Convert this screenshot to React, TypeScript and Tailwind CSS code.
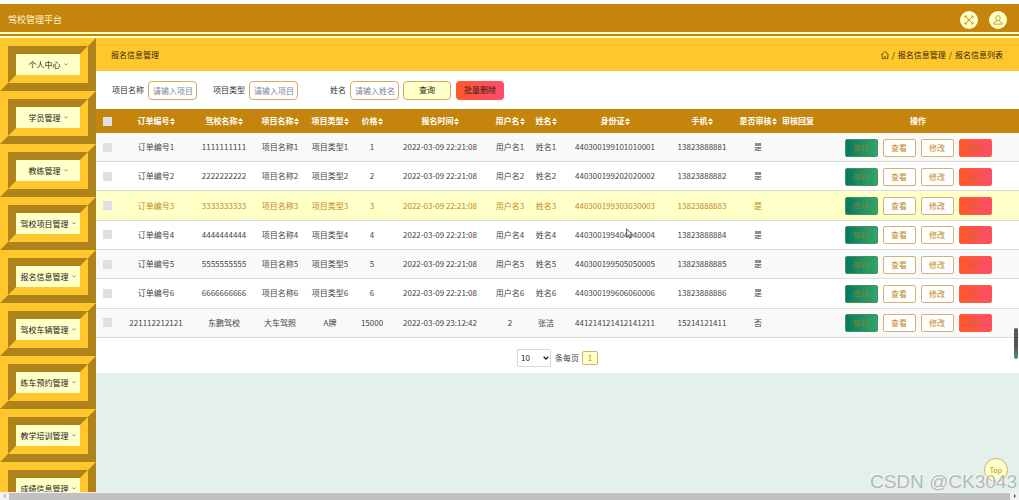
import { useState } from "react";
import clsx from "clsx";

const MENU = [
  "个人中心",
  "学员管理",
  "教练管理",
  "驾校项目管理",
  "报名信息管理",
  "驾校车辆管理",
  "练车预约管理",
  "教学培训管理",
  "成绩信息管理",
];

const COLUMNS: { label: string; width: string; sortable: boolean }[] = [
  { label: "订单编号", width: "w-[74px]", sortable: true },
  { label: "驾校名称", width: "w-[62px]", sortable: true },
  { label: "项目名称", width: "w-[50px]", sortable: true },
  { label: "项目类型", width: "w-[50px]", sortable: true },
  { label: "价格", width: "w-[34px]", sortable: true },
  { label: "报名时间", width: "w-[102px]", sortable: true },
  { label: "用户名", width: "w-[38px]", sortable: true },
  { label: "姓名", width: "w-[34px]", sortable: true },
  { label: "身份证", width: "w-[104px]", sortable: true },
  { label: "手机", width: "w-[70px]", sortable: true },
  { label: "是否审核", width: "w-[42px]", sortable: true },
  { label: "审核回复", width: "w-[38px]", sortable: false },
];

const ROWS: string[][] = [
  ["订单编号1", "1111111111", "项目名称1", "项目类型1", "1", "2022-03-09 22:21:08", "用户名1", "姓名1", "440300199101010001", "13823888881", "是", ""],
  ["订单编号2", "2222222222", "项目名称2", "项目类型2", "2", "2022-03-09 22:21:08", "用户名2", "姓名2", "440300199202020002", "13823888882", "是", ""],
  ["订单编号3", "3333333333", "项目名称3", "项目类型3", "3", "2022-03-09 22:21:08", "用户名3", "姓名3", "440300199303030003", "13823888883", "是", ""],
  ["订单编号4", "4444444444", "项目名称4", "项目类型4", "4", "2022-03-09 22:21:08", "用户名4", "姓名4", "440300199404040004", "13823888884", "是", ""],
  ["订单编号5", "5555555555", "项目名称5", "项目类型5", "5", "2022-03-09 22:21:08", "用户名5", "姓名5", "440300199505050005", "13823888885", "是", ""],
  ["订单编号6", "6666666666", "项目名称6", "项目类型6", "6", "2022-03-09 22:21:08", "用户名6", "姓名6", "440300199606060006", "13823888886", "是", ""],
  ["221112212121", "东鹏驾校", "大车驾照", "A牌", "15000", "2022-03-09 23:12:42", "2", "张洁", "441214121412141211", "15214121411", "否", ""],
];

const FILTERS = [
  { id: "project-name", label: "项目名称", placeholder: "请输入项目名称" },
  { id: "project-type", label: "项目类型", placeholder: "请输入项目类型" },
  { id: "student-name", label: "姓名", placeholder: "请输入姓名" },
];

function SortIcon() {
  return (
    <svg viewBox="0 0 5 7" className="w-[5px] h-[7px] fill-white" aria-hidden="true">
      <path d="M2.5 0 5 3H0zM2.5 7 0 4h5z" />
    </svg>
  );
}

function Header() {
  return (
    <header className="shrink-0 flex items-center justify-between h-[34px] pl-2 pr-3 bg-[#c5850c] border-b-[6px] border-double border-[#ffffc8] box-border">
      <h1 className="pt-1 text-[9px] leading-3 text-[#fff8d8]">驾校管理平台</h1>
      <div className="flex gap-[11px] pt-1">
        <button aria-label="全屏" className="w-[18px] h-[18px] rounded-full bg-[#ffffc8] flex items-center justify-center">
          <svg viewBox="0 0 10 10" className="w-[10px] h-[10px] fill-none stroke-[#c5850c]" strokeWidth="0.8">
            <path d="M1 3V1h2M7 1h2v2M9 7v2H7M3 9H1V7M1 1l3.2 3.2M9 1 5.8 4.2M9 9 5.8 5.8M1 9l3.2-3.2M4.2 4.2h1.6v1.6H4.2z" />
          </svg>
        </button>
        <button aria-label="用户" className="w-[18px] h-[18px] rounded-full bg-[#ffffc8] flex items-center justify-center">
          <svg viewBox="0 0 10 10" className="w-[10px] h-[10px] fill-none stroke-[#c5850c]" strokeWidth="0.8">
            <path d="M5 .7c1.5 0 2.200 1 2.200 2.300S6.300 5.600 5 5.600 2.800 4.300 2.800 3 3.500.7 5 .7zM3.700 5.300v.9L1.200 7.400c-.4.3-.5.8-.5 1.700h8.600c0-.9-.1-1.400-.5-1.700L6.300 6.200v-.9" />
          </svg>
        </button>
      </div>
    </header>
  );
}

function Sidebar() {
  return (
    <nav className="shrink-0 w-24 overflow-hidden">
      {MENU.map((item) => (
        <div key={item} className="border-8 border-t-[#ffc72c] border-l-[#ffc72c] border-r-[#ae841a] border-b-[#ae841a]">
          <div className="border-8 border-t-[#ae841a] border-l-[#ae841a] border-r-[#ffc72c] border-b-[#ffc72c]">
            <a href="#" className="flex items-center justify-center gap-[3px] h-[21px] bg-[#ffffc8] text-[8px] leading-3 text-[#222] whitespace-nowrap">
              {item}
              <svg viewBox="0 0 4 3" className="w-1 h-[3px] fill-none stroke-[#777]" strokeWidth="0.8">
                <path d="M.4.5 2 2 3.600.5" />
              </svg>
            </a>
          </div>
        </div>
      ))}
    </nav>
  );
}

function TitleBar() {
  return (
    <div className="flex items-center justify-between h-[33px] pl-[15px] pr-4 bg-[#ffc72c] text-[8px] leading-3 text-[#33260a]">
      <h2>报名信息管理</h2>
      <div className="flex items-center gap-[3px]">
        <a href="#" aria-label="首页">
          <svg viewBox="0 0 8 8" className="w-2 h-2 fill-none stroke-[#33260a]" strokeWidth="0.7">
            <path d="M.4 3.700 4 .6l3.600 3.100M1.200 3.100v4.300h5.600V3.100M3 5.700h2" />
          </svg>
        </a>
        <span>/</span>
        <a href="#">报名信息管理</a>
        <span>/</span>
        <span>报名信息列表</span>
      </div>
    </div>
  );
}

function Filters() {
  return (
    <form className="flex items-center h-[38px] pl-4 text-[8px] leading-3 text-[#333]" onSubmit={(e) => e.preventDefault()}>
      <div className="flex gap-4">
        {FILTERS.map((f) => (
          <div key={f.id} className="flex items-center gap-1">
            <label htmlFor={f.id} className="w-8 text-right whitespace-nowrap">{f.label}</label>
            <input
              id={f.id}
              type="text"
              placeholder={f.placeholder}
              className="w-[49px] h-[19px] pl-1 pr-[3px] rounded border border-[#d3ac62] bg-white placeholder:text-[#7b8490] outline-none"
            />
          </div>
        ))}
      </div>
      <button type="submit" className="ml-1 w-12 h-[19px] rounded border border-[#d3ac62] bg-[#ffffc8] text-[#222]">
        查询
      </button>
      <button type="button" className="ml-[5px] w-12 h-[19px] rounded bg-linear-to-r from-[#ff5722] to-[#ff4b6e] text-[#3a1a12]">
        批量删除
      </button>
    </form>
  );
}

function RowActions() {
  const base = "w-[33px] h-[18px] rounded-xs border text-[8px] leading-3";
  return (
    <div className="flex justify-center gap-[5px] pt-px">
      <button className={clsx(base, "border-[#4c9055] bg-linear-to-r from-[#04795c] to-[#2fa66b] text-[#7c852f]")}>审核</button>
      <button className={clsx(base, "border-[#d0b274] bg-white text-[#c08a28]")}>查看</button>
      <button className={clsx(base, "border-[#d0b274] bg-white text-[#c08a28]")}>修改</button>
      <button className={clsx(base, "border-[#fb5f33] bg-linear-to-r from-[#ff5722] to-[#ff4b6e] text-[#e0622c]")}>删除</button>
    </div>
  );
}

function Checkbox({ label }: { label: string }) {
  return (
    <input
      type="checkbox"
      aria-label={label}
      className="block mx-auto w-[9px] h-[9px] appearance-none bg-[#dfdfe4] checked:bg-[#c5850c]"
    />
  );
}

function OrdersTable() {
  const activeRow = 2;
  return (
    <table className="w-full h-[229px] table-fixed border-collapse text-[8px] leading-3 text-center text-[#444] whitespace-nowrap">
      <thead>
        <tr className="h-6 bg-[#c5850c] text-white">
          <th className="w-[23px] p-0">
            <Checkbox label="全选" />
          </th>
          {COLUMNS.map((col) => (
            <th key={col.label} className={clsx("p-0 font-bold", col.width)}>
              <span className="flex items-center justify-center">
                {col.label}
                {col.sortable && <SortIcon />}
              </span>
            </th>
          ))}
          <th className="p-0 font-bold">操作</th>
        </tr>
      </thead>
      <tbody>
        {ROWS.map((row, i) => (
          <tr
            key={row[0]}
            className={clsx(
              "border-b border-[#dcdcdc]",
              i === activeRow ? "bg-[#ffffc8] text-[#c08a28]" : i % 2 === 0 ? "bg-[#f9f9f9]" : "bg-white"
            )}
          >
            <td className="p-0">
              <Checkbox label={row[0]} />
            </td>
            {row.map((cell, j) => (
              <td key={COLUMNS[j].label} className="p-0">{cell}</td>
            ))}
            <td className="p-0">
              <RowActions />
            </td>
          </tr>
        ))}
      </tbody>
    </table>
  );
}

function Pagination() {
  const [size, setSize] = useState("10");
  return (
    <div className="flex items-center justify-center h-[35px] pt-1 text-[8px] leading-3 text-[#444]">
      <div className="relative">
        <select
          id="page-size"
          value={size}
          onChange={(e) => setSize(e.target.value)}
          className="block w-[34px] h-[18px] pl-[3px] appearance-none rounded-xs border border-[#d8d8d8] bg-white text-[#222]"
        >
          <option>10</option>
          <option>25</option>
          <option>50</option>
        </select>
        <svg viewBox="0 0 6 4" className="absolute right-[2px] top-[7px] w-[6px] h-1 fill-none stroke-[#222] pointer-events-none" strokeWidth="1.3">
          <path d="M.6.7 3 3 5.400.7" />
        </svg>
      </div>
      <label htmlFor="page-size" className="ml-1">条每页</label>
      <button className="ml-[3px] w-4 h-[14px] rounded-xs border border-[#cdb565] bg-[#ffffc8] text-[#c08a28]">1</button>
    </div>
  );
}

function HorizontalScrollbar() {
  return (
    <div className="shrink-0 flex items-center h-2 bg-[#f1f1f1]">
      <svg viewBox="0 0 9 8" className="w-[9px] h-2 fill-[#a3a3a3]">
        <path d="M5.500 2v4l-2-2z" />
      </svg>
      <div className="flex-1 h-[7px] bg-[#c1c1c1]" />
      <svg viewBox="0 0 9 8" className="w-[9px] h-2 fill-[#505050]">
        <path d="M4 2v4l2-2z" />
      </svg>
    </div>
  );
}

export default function App() {
  return (
    <div className="relative flex flex-col h-screen overflow-hidden bg-white pt-1 font-['Noto_Sans_CJK_SC',sans-serif]">
      <Header />
      <div className="flex flex-1 min-h-0">
        <Sidebar />
        <main className="flex-1 min-w-0 bg-[#e3f0ec]">
          <TitleBar />
          <div className="bg-white">
            <Filters />
            <OrdersTable />
            <Pagination />
          </div>
        </main>
      </div>
      <HorizontalScrollbar />

      {/* page scroll thumb */}
      <div className="absolute right-px top-[328px] w-1 h-[31px] rounded-full bg-linear-to-b from-[#555] from-60% to-[#4c9a62]" />

      <button className="absolute right-[11px] bottom-[18px] w-6 h-6 rounded-full border border-[#cdb565] bg-[#ffffc8] text-[7px] leading-3 text-[#c08a28]">
        Top
      </button>

      <span className="absolute right-[2px] bottom-[6px] font-['Liberation_Sans',sans-serif] text-[19px] leading-6 text-[#b4b9b8] [text-shadow:-1px_-1px_0_#ffffffb0] pointer-events-none">
        CSDN @CK3043
      </span>

      {/* mouse pointer */}
      <svg viewBox="0 0 8 11" className="absolute left-[626px] top-[228px] w-2 h-[11px] fill-white stroke-[#333] pointer-events-none" strokeWidth="0.8">
        <path d="M.6.8v8l1.900-1.600 1.300 3 1.300-.6-1.300-2.900h2.700z" />
      </svg>
    </div>
  );
}
